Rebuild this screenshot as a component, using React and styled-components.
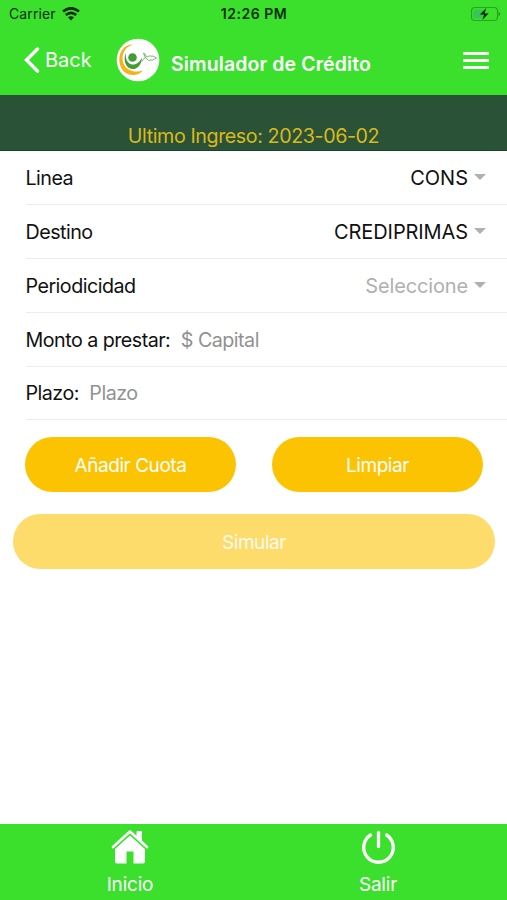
import React from 'react';
import styled, { createGlobalStyle } from 'styled-components';

const selects = [
  { label: 'Linea', value: 'CONS', spacing: '0' },
  { label: 'Destino', value: 'CREDIPRIMAS', spacing: '-0.1px' },
  { label: 'Periodicidad', value: 'Seleccione', empty: true, spacing: '-0.15px' },
];

const inputs = [
  { label: 'Monto a prestar:', placeholder: '$ Capital' },
  { label: 'Plazo:', placeholder: 'Plazo' },
];

function Logo() {
  return (
    <LogoImage viewBox="0 0 44 44">
      <circle cx="22" cy="22" r="21.3" fill="#fff" />
      <path d="M17 6.500C9 6 3.300 13 3.300 21.500C3.300 30.500 9 37 16.500 37C21.500 37 25 35 27 32.500C18 36 6.500 31 6.500 20.500C6.500 13.500 10.500 8.500 17 6.500Z" fill="#f9b01c" />
      <path d="M10 14.500C7.500 20 8.500 27 13 30C19 33.500 25.500 28.500 26 19.500C23.500 24.500 20 27 16 26.500C11 25.500 9 20 10 14.500Z" fill="#459b35" />
      <circle cx="16.500" cy="19.500" r="4.300" fill="#459b35" />
      <path d="M26 23.500Q28.500 18.500 33.500 18Q38.500 17.500 40.500 20Q37 22.800 32.500 22.300Q28.500 20.500 27.500 15Q30 16 30 18.500" fill="none" stroke="#70ad62" strokeWidth="0.9" />
    </LogoImage>
  );
}

function App() {
  return (
    <Screen>
      <GlobalStyle />
      <Header>
        <StatusBar>
          <Carrier>
            <span>Carrier</span>
            <svg width="18" height="14" viewBox="0 0 18 14" fill="none" stroke="#062c03" strokeWidth="2.700">
              <path d="M1 4.500Q9-2 17 4.500" />
              <path d="M3.800 8Q9 3.600 14.200 8" />
              <path d="M6 10.300Q9 8 12 10.300L9 13.500Z" fill="#062c03" stroke="none" />
            </svg>
          </Carrier>
          <Clock>12:26 PM</Clock>
          <Battery>
            <svg width="31" height="16" viewBox="0 0 31 16">
              <rect x="1.500" y="1.500" width="26" height="13" rx="3.500" fill="none" stroke="#2ba31c" strokeWidth="1.200" />
              <rect x="3.500" y="3.500" width="9" height="9" rx="1.500" fill="#35c759" />
              <path d="M28.500 5.200L30.500 8L28.500 10.800Z" fill="#249718" />
              <path d="M16.500 1.500L9.500 8.800H13.800L12 14.500L19 7.200H14.800Z" fill="#041f02" stroke="#3be02d" strokeWidth="0.400" />
            </svg>
          </Battery>
        </StatusBar>
        <NavBar>
          <BackButton>
            <svg width="17" height="27" viewBox="0 0 17 27" fill="none" stroke="#fff" strokeWidth="3.400" strokeLinecap="round">
              <path d="M14.500 2L3.500 13L14.500 24" />
            </svg>
            <BackLabel>Back</BackLabel>
          </BackButton>
          <Logo />
          <Title>Simulador de Crédito</Title>
          <MenuButton aria-label="Menu">
            <MenuLine />
            <MenuLine />
            <MenuLine />
          </MenuButton>
        </NavBar>
      </Header>
      <LastLogin>Ultimo Ingreso: 2023-06-02</LastLogin>
      <Form>
        {selects.map(({ label, value, empty, spacing }) => (
          <Row key={label}>
            <Label>{label}</Label>
            <Value $empty={empty} $spacing={spacing}>{value}</Value>
            <Arrow />
          </Row>
        ))}
        {inputs.map(({ label, placeholder }) => (
          <Row key={label}>
            <Label>{label}</Label>
            <Input placeholder={placeholder} />
          </Row>
        ))}
      </Form>
      <Actions>
        <Button>Añadir Cuota</Button>
        <Button>Limpiar</Button>
      </Actions>
      <Submit>
        <Button disabled>Simular</Button>
      </Submit>
      <Footer>
        <Tab>
          <svg width="38" height="36" viewBox="0 0 38 36">
            <path d="M2 18L19 2.500L36 18" fill="none" stroke="#fff" strokeWidth="2.600" strokeLinecap="round" strokeLinejoin="round" />
            <path d="M26 2.500H30.500V12L26 8Z" fill="#fff" stroke="#fff" strokeWidth="1" strokeLinejoin="round" />
            <path d="M19 6.500L34 20V32.500Q34 34.500 32 34.500H22.500V22.500H15.500V34.500H6Q4 34.500 4 32.500V20Z" fill="#fff" />
          </svg>
          <TabLabel>Inicio</TabLabel>
        </Tab>
        <Tab>
          <svg width="38" height="36" viewBox="0 0 38 36" fill="none" stroke="#fff" strokeWidth="3.300" strokeLinecap="round">
            <path d="M11.500 6A14.800 14.800 0 1 0 27.500 6" />
            <path d="M19.500 3.500V17.500" />
          </svg>
          <TabLabel>Salir</TabLabel>
        </Tab>
      </Footer>
    </Screen>
  );
}

const GlobalStyle = createGlobalStyle`
  * {
    box-sizing: border-box;
  }
  body {
    margin: 0;
    background-color: #fff;
    font-family: Inter, 'Liberation Sans', sans-serif;
  }
  svg {
    display: block;
    flex: none;
  }
`;

const Screen = styled.div`
  display: flex;
  flex-direction: column;
  height: 900px;
  overflow: hidden;
`;
const Header = styled.header`
  height: 95px;
  flex: none;
  color: #fff;
  background-color: #3be02d;
`;
const StatusBar = styled.div`
  display: grid;
  grid-template-columns: 1fr auto 1fr;
  align-items: center;
  height: 27px;
  padding: 0 6px 0 9px;
  font-size: 14px;
  color: #062c03;
`;
const Carrier = styled.div`
  display: flex;
  align-items: center;
  gap: 6px;
  letter-spacing: 0.1px;
`;
const Clock = styled.span`
  margin-right: 2px;
  font-weight: 600;
  letter-spacing: 0.5px;
`;
const Battery = styled.div`
  justify-self: end;
`;
const NavBar = styled.div`
  display: flex;
  align-items: center;
  height: 67px;
  padding: 0 18px 0 23px;
`;
const BackButton = styled.div`
  display: flex;
  align-items: center;
  gap: 5px;
  width: 92.5px;
  font-size: 20px;
`;
const BackLabel = styled.span`
  margin-bottom: 2px;
`;
const LogoImage = styled.svg`
  width: 44px;
  height: 44px;
  margin-bottom: 1px;
`;
const Title = styled.h1`
  margin: 7px 0 0 11.5px;
  font-size: 19.5px;
  font-weight: 600;
  letter-spacing: 0.1px;
  white-space: nowrap;
`;
const MenuButton = styled.button`
  display: flex;
  flex-direction: column;
  gap: 4px;
  margin: 0 0 1px auto;
  padding: 0;
  border: 0;
  background: none;
`;
const MenuLine = styled.span`
  width: 26px;
  height: 3px;
  border-radius: 1px;
  background-color: #fff;
`;
const LastLogin = styled.div`
  flex: none;
  height: 56px;
  padding-top: 29px;
  border-bottom: 1px solid #1c4228;
  font-size: 19.7px;
  line-height: 24px;
  letter-spacing: -0.42px;
  text-align: center;
  color: #dcb91b;
  background-color: #295237;
`;
const Form = styled.div`
  padding: 0.5px 0 0 25.5px;
`;
const Row = styled.div`
  display: flex;
  align-items: center;
  height: 53.8px;
  padding: 0.8px 21px 0 0;
  border-bottom: 1px solid #ececec;
  font-size: 19.7px;
  letter-spacing: -0.52px;
`;
const Label = styled.label`
  color: #111;
`;
const Value = styled.span`
  margin-left: auto;
  font-size: 20px;
  letter-spacing: ${({ $spacing }) => $spacing};
  color: ${({ $empty }) => ($empty ? '#b0b0b0' : '#111')};
`;
const Arrow = styled.span`
  margin: -2px 0 0 6px;
  border: 6px solid transparent;
  border-top-color: #b0b0b0;
  border-bottom: 0;
`;
const Input = styled.input`
  flex: 1;
  min-width: 0;
  margin-left: 10.5px;
  padding: 0;
  border: 0;
  outline: 0;
  font: inherit;
  letter-spacing: inherit;

  &::placeholder {
    color: #919191;
  }
`;
const Actions = styled.div`
  display: flex;
  gap: 36px;
  padding: 16.5px 24px 0 25px;
`;
const Submit = styled.div`
  display: flex;
  padding: 22px 12px 0 13px;
`;
const Button = styled.button`
  flex: 1;
  height: 55px;
  padding: 2px 0 0;
  border: 0;
  border-radius: 28px;
  font-family: inherit;
  font-size: 19px;
  letter-spacing: -0.45px;
  color: #fff;
  background-color: #fcc302;

  &:disabled {
    color: #fffbee;
    background-color: #fddc6b;
  }
`;
const Footer = styled.footer`
  display: flex;
  height: 76px;
  margin-top: auto;
  padding: 0 5px 0 6px;
  background-color: #3be02d;
`;
const Tab = styled.div`
  display: flex;
  flex: 1;
  flex-direction: column;
  align-items: center;
  padding-top: 5px;
`;
const TabLabel = styled.span`
  margin-top: 8px;
  font-size: 19px;
  line-height: 24px;
  letter-spacing: -0.2px;
  color: #fff;
`;

export default App;
